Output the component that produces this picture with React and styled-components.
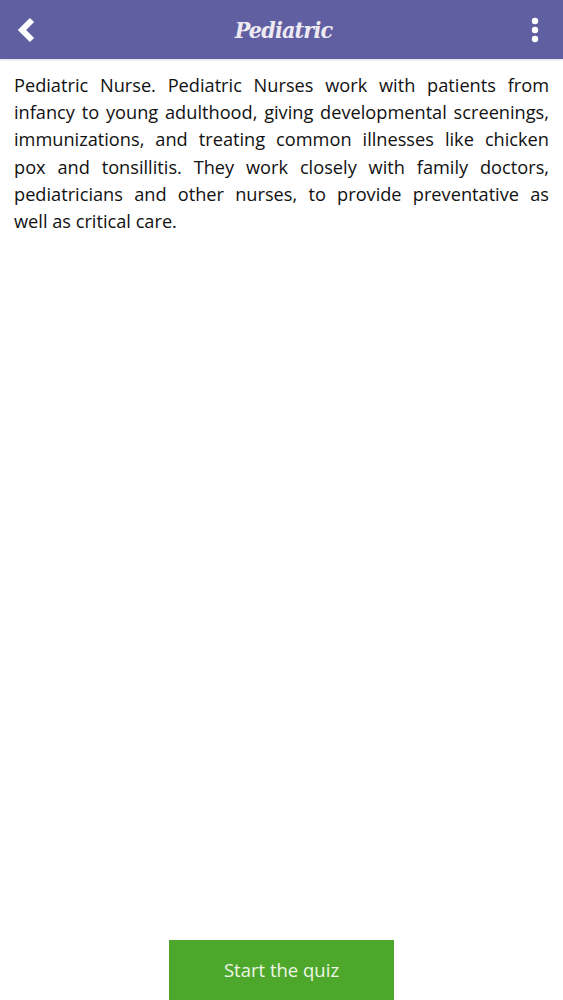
import React from "react";
import styled, { createGlobalStyle } from "styled-components";

const Global = createGlobalStyle`
  html, body { margin: 0; padding: 0; background: #fff; }
  * { box-sizing: border-box; }
`;

const Page = styled.div`
  display: flex;
  flex-direction: column;
  height: 100vh;
  background: #fff;
  font-family: "Open Sans", "Noto Sans", sans-serif;
`;

const Toolbar = styled.header`
  display: flex;
  align-items: center;
  justify-content: space-between;
  height: 59px;
  padding: 0 16px 0 14px;
  background: #5f5fa1;
  box-shadow: 0 1px 2px rgba(0, 0, 0, 0.15);
`;

const IconButton = styled.button`
  display: flex;
  align-items: center;
  justify-content: center;
  width: 24px;
  height: 40px;
  padding: 0;
  border: 0;
  background: none;
  cursor: pointer;
`;

const Title = styled.h1`
  margin: 0 0 0 6px;
  color: #efeaf2;
  font-family: "DejaVu Serif Condensed", "DejaVu Serif", serif;
  font-style: italic;
  font-weight: bold;
  font-size: 23px;
  letter-spacing: -0.8px;
`;

const Body = styled.p`
  margin: 0;
  padding: 13px 14px 0 14px;
  color: #111;
  font-size: 18.2px;
  line-height: 27.2px;
  white-space: nowrap;
`;

const Line = styled.span`
  display: block;
  text-align: ${(p) => (p.$last ? "left" : "justify")};
  text-align-last: ${(p) => (p.$last ? "left" : "justify")};
`;

const Footer = styled.div`
  display: flex;
  justify-content: center;
  margin-top: auto;
`;

const StartButton = styled.button`
  width: 225px;
  height: 60px;
  border: 0;
  padding: 0 0 2px;
  background: #4da72b;
  color: #eef6e8;
  font-family: "Open Sans", "Noto Sans", sans-serif;
  font-size: 18.5px;
  cursor: pointer;
`;

const lines = [
  "Pediatric Nurse. Pediatric Nurses work with patients from",
  "infancy to young adulthood, giving developmental screenings,",
  "immunizations, and treating common illnesses like chicken",
  "pox and tonsillitis. They work closely with family doctors,",
  "pediatricians and other nurses, to provide preventative as",
  "well as critical care.",
];

export default function App() {
  return (
    <Page>
      <Global />
      <Toolbar>
        <IconButton aria-label="Back">
          <svg width="22" height="26" viewBox="0 0 22 26">
            <path d="M17 3 L7 13 L17 23" fill="none" stroke="#fff" strokeWidth="6" strokeLinejoin="miter" />
          </svg>
        </IconButton>
        <Title>Pediatric</Title>
        <IconButton aria-label="Menu">
          <svg width="8" height="26" viewBox="0 0 8 26">
            <circle cx="4" cy="4" r="3.2" fill="#fff" />
            <circle cx="4" cy="13" r="3.2" fill="#fff" />
            <circle cx="4" cy="22" r="3.2" fill="#fff" />
          </svg>
        </IconButton>
      </Toolbar>
      <Body>
        {lines.map((text, i) => (
          <Line key={i} $last={i === lines.length - 1}>
            {text}
          </Line>
        ))}
      </Body>
      <Footer>
        <StartButton>Start the quiz</StartButton>
      </Footer>
    </Page>
  );
}
